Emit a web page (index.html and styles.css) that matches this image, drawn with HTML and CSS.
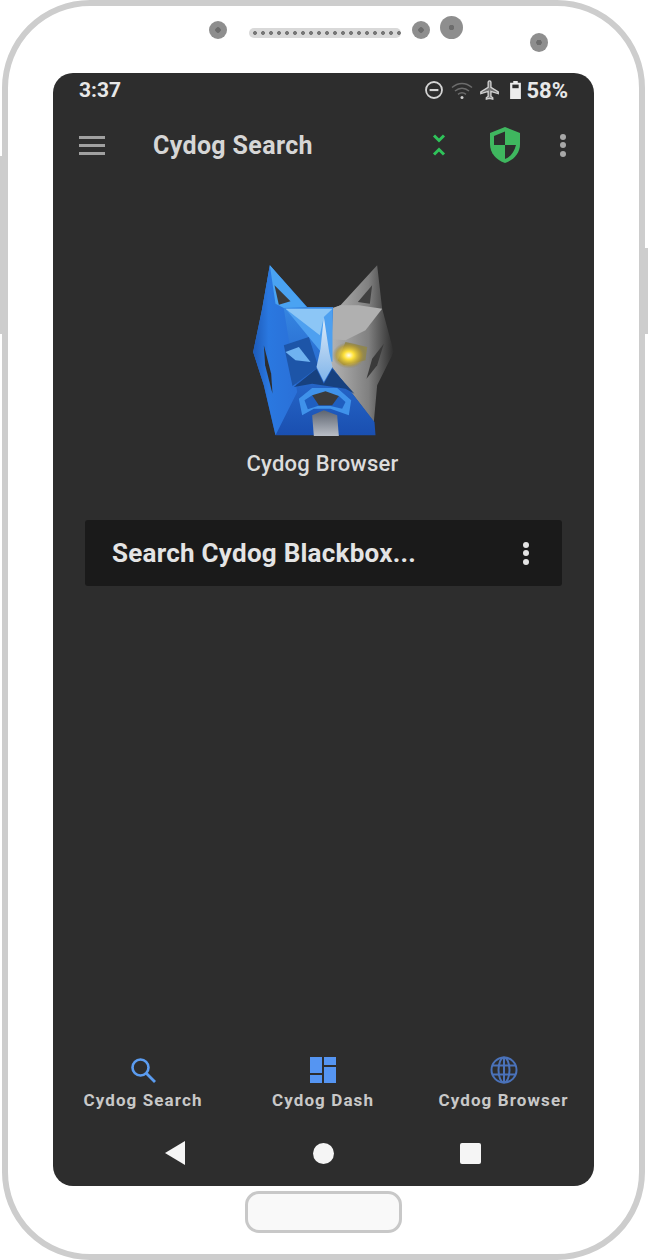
FILE: index.html
```html
<!DOCTYPE html>
<html lang="en">
<head>
    <meta charset="UTF-8">
    <meta name="viewport" content="width=device-width, initial-scale=1.0">
    <title>Cydog Search</title>
    <link rel="stylesheet" href="styles.css">
</head>
<body>
    <div class="side-key side-key-left"></div>
    <div class="side-key side-key-right"></div>
    <div class="phone">
        <div class="sensors">
            <span class="sensor sensor-a"></span>
            <span class="speaker"></span>
            <span class="sensor sensor-b"></span>
            <span class="sensor sensor-c"></span>
            <span class="sensor sensor-d"></span>
        </div>

        <div class="screen">
            <div class="status-bar">
                <span class="clock">3:37</span>
                <div class="status-icons">
                    <svg class="st-dnd" viewBox="0 0 20 20"><circle cx="10" cy="10" r="8" fill="none" stroke="#d4d4d4" stroke-width="1.8"/><rect x="5.600" y="9" width="8.800" height="2.100" fill="#d4d4d4"/></svg>
                    <svg class="st-wifi" viewBox="0 0 24 20"><path d="M2 7.500C8 2 16 2 22 7.500M5 11c4.200-3.600 9.800-3.600 14 0M8 14.300c2.500-2 5.500-2 8 0" fill="none" stroke="#6b6b6b" stroke-width="1.500"/><circle cx="12" cy="17.500" r="1.500" fill="#cfcfcf"/></svg>
                    <svg class="st-plane" viewBox="0 0 24 24"><path d="M21 16v-2l-8-5V3.500c0-.83-.67-1.500-1.500-1.500S10 2.670 10 3.500V9l-8 5v2l8-2.500V19l-2 1.500V22l3.500-1 3.500 1v-1.500L13 19v-5.500l8 2.500z" fill="#6f6f6f" stroke="#d0d0d0" stroke-width="1.500"/></svg>
                    <svg class="st-batt" viewBox="0 0 14 20"><path d="M4.500 0h5v2H13v18H1V2h3.500z" fill="#ececec"/><rect x="3.500" y="4" width="7" height="4" fill="#2d2d2d"/></svg>
                    <span class="batt-text">58%</span>
                </div>
            </div>

            <div class="app-bar">
                <div class="menu-icon"><span></span><span></span><span></span></div>
                <span class="app-title">Cydog Search</span>
                <svg class="ic-chevrons" viewBox="0 0 14 24"><path d="M2 2.500l5 5 5-5M2 21.500l5-5 5 5" fill="none" stroke="#2fc35a" stroke-width="3"/></svg>
                <svg class="ic-shield" viewBox="0 0 30 36"><path d="M15 0L30 6v11c0 9-6 16-15 19C6 33 0 26 0 17V6z" fill="#3fb75f"/><path d="M15 4.500L4 9v9h11zM15 18v14c5.500-2 9.500-7.500 11-14z" fill="#2d2d2d"/></svg>
                <div class="kebab kebab-bar"><span></span><span></span><span></span></div>
            </div>

            <div class="brand">
                <svg class="logo" viewBox="10.500 0 540 600">
                    <defs>
                        <linearGradient id="blueBody" x1="0" y1="0" x2="0" y2="1">
                            <stop offset="0" stop-color="#3f98ee"/>
                            <stop offset="0.55" stop-color="#2a6fd2"/>
                            <stop offset="1" stop-color="#1a4fb0"/>
                        </linearGradient>
                        <linearGradient id="greySide" x1="0" y1="0" x2="1" y2="0">
                            <stop offset="0" stop-color="#b4b4b4"/>
                            <stop offset="0.6" stop-color="#808080"/>
                            <stop offset="1" stop-color="#2d2d2d"/>
                        </linearGradient>
                        <linearGradient id="leftEdge" x1="0" y1="0" x2="1" y2="0">
                            <stop offset="0" stop-color="#1d5ab8"/>
                            <stop offset="0.35" stop-color="#2a78e0"/>
                            <stop offset="1" stop-color="#2a70d8"/>
                        </linearGradient>
                        <linearGradient id="neck" x1="0" y1="0" x2="0" y2="1">
                            <stop offset="0" stop-color="#5d6470"/>
                            <stop offset="1" stop-color="#b9bec6"/>
                        </linearGradient>
                        <linearGradient id="blade" x1="0" y1="0" x2="0" y2="1">
                            <stop offset="0" stop-color="#e0ecf8"/>
                            <stop offset="1" stop-color="#7fb4ea"/>
                        </linearGradient>
                        <radialGradient id="glow" cx="0.5" cy="0.5" r="0.5">
                            <stop offset="0" stop-color="#fffdf0"/>
                            <stop offset="0.3" stop-color="#ffe23a"/>
                            <stop offset="0.75" stop-color="#b59a34" stop-opacity="0.7"/>
                            <stop offset="1" stop-color="#8a8260" stop-opacity="0"/>
                        </radialGradient>
                    </defs>
                    <polygon points="440,40 330,160 306,168 300,340 430,510 440,400 490,300 455,170" fill="url(#greySide)"/>
                    <polygon points="330,160 385,160 455,170 405,235 345,265 306,262 306,170" fill="#b0b0b0"/>
                    <polygon points="118,40 230,165 308,165 300,340 432,510 435,550 135,550 100,400 68,300 95,170" fill="url(#blueBody)"/>
                    <polygon points="68,300 95,170 118,40 160,170 200,420 135,550 100,400" fill="url(#leftEdge)"/>
                    <polygon points="118,40 228,165 160,168 135,155" fill="#4aa3f2"/>
                    <polygon points="132,100 180,148 145,158" fill="#3b3b3b"/>
                    <polygon points="425,100 382,150 418,155" fill="#404040"/>
                    <polygon points="165,170 306,170 306,330 292,325" fill="#4ea0f0"/>
                    <polygon points="165,170 306,170 280,195 268,250" fill="#8cc6f6"/>
                    <polygon points="160,280 235,255 264,345 186,402" fill="#1d55a8"/>
                    <polygon points="165,300 205,285 240,330 195,325" fill="#6fb2f0"/>
                    <polygon points="100,280 122,365 126,425 104,340" fill="#2d2d2d"/>
                    <polygon points="460,275 440,340 408,380 425,320" fill="#3a3a3a"/>
                    <polygon points="322,325 345,270 410,285 405,325 340,340" fill="#8f8650"/>
                    <ellipse cx="355" cy="310" rx="50" ry="40" fill="url(#glow)"/>
                    <polygon points="280,195 296,300 306,345 280,390 258,345 270,290" fill="url(#blade)"/>
                    <polygon points="190,405 258,350 280,395 305,350 372,425 345,410 245,395" fill="#17417f"/>
                    <polygon points="205,440 245,408 320,408 362,445 355,490 300,470 250,470 215,490" fill="#3f92ea"/>
                    <polygon points="222,445 245,430 325,432 345,450 335,470 300,462 262,462 232,472" fill="#1f5fc0"/>
                    <polygon points="245,430 285,418 325,432 305,460 265,460" fill="#3b3b3b"/>
                    <polygon points="245,490 280,475 320,490 325,552 250,552" fill="url(#neck)"/>
                </svg>
                <span class="brand-name">Cydog Browser</span>
            </div>

            <div class="search-box">
                <span class="search-text">Search Cydog Blackbox...</span>
                <div class="kebab kebab-search"><span></span><span></span><span></span></div>
            </div>

            <div class="spacer"></div>

            <div class="tabs">
                <div class="tab">
                    <svg class="tab-icon" viewBox="0 0 28 28"><circle cx="11.500" cy="11.500" r="8" fill="none" stroke="#5b9cf0" stroke-width="2.600"/><path d="M17.500 17.500L26 26" stroke="#5b9cf0" stroke-width="2.800"/></svg>
                    <span class="tab-label">Cydog Search</span>
                </div>
                <div class="tab">
                    <svg class="tab-icon" viewBox="0 0 28 28"><path d="M1 1h12v16H1zM1 19h12v8H1zM15 1h12v8H15zM15 11h12v16H15z" fill="#5595f2"/></svg>
                    <span class="tab-label">Cydog Dash</span>
                </div>
                <div class="tab">
                    <svg class="tab-icon" viewBox="0 0 28 28"><g fill="none" stroke="#4a72ba" stroke-width="2"><circle cx="14" cy="14" r="12.500"/><ellipse cx="14" cy="14" rx="5.500" ry="12.500"/><path d="M2.500 9.500h23M2.500 18.500h23M14 1.500v25"/></g></svg>
                    <span class="tab-label">Cydog Browser</span>
                </div>
            </div>

            <div class="nav-bar">
                <svg class="nav-back" viewBox="0 0 20 24"><path d="M20 0v24L0 12z" fill="#f5f5f5"/></svg>
                <span class="nav-home"></span>
                <span class="nav-recent"></span>
            </div>
        </div>

        <div class="home-row">
            <div class="home-button"></div>
        </div>
    </div>
</body>
</html>
```

FILE: styles.css
```css
body {
    margin: 0;
    background-color: #ffffff;
    font-family: Roboto, "Liberation Sans", sans-serif;
    overflow: hidden;
}
.phone {
    box-sizing: border-box;
    width: 643px;
    height: 1260px;
    margin-left: 2px;
    padding: 0 45px;
    border: 6px solid #cdcdcd;
    border-radius: 88px;
    background-color: white;
}
.side-key {
    position: absolute;
    width: 3px;
    background-color: #cdcdcd;
}
.side-key-left {
    left: 0;
    top: 156px;
    height: 178px;
}
.side-key-right {
    left: 645px;
    top: 248px;
    height: 86px;
}

/* bezel hardware */
.sensors {
    display: flex;
    align-items: flex-start;
    height: 67px;
    padding-left: 156px;
}
.sensor {
    flex: none;
    box-sizing: border-box;
    background-color: #8e8e8e;
    background-image: radial-gradient(circle, #6c6c6c 0 2.5px, transparent 3px);
    border-radius: 50%;
}
.sensor-a {
    width: 18px;
    height: 18px;
    margin-top: 15px;
}
.speaker {
    width: 152px;
    height: 10px;
    margin: 22px 11px 0 22px;
    background-color: #d9d9d9;
    background-image: radial-gradient(circle, #777 0 1.8px, transparent 2.2px);
    background-size: 8px 10px;
    background-position: 2px 0;
    border-radius: 5px;
}
.sensor-b {
    width: 18px;
    height: 18px;
    margin-top: 15px;
}
.sensor-c {
    width: 23px;
    height: 23px;
    margin: 10px 0 0 10px;
}
.sensor-d {
    width: 18px;
    height: 19px;
    margin: 27px 0 0 67px;
}

.screen {
    display: flex;
    flex-direction: column;
    height: 1113px;
    background-color: #2d2d2d;
    border-radius: 20px;
    overflow: hidden;
}
.status-bar {
    display: flex;
    justify-content: space-between;
    align-items: center;
    height: 34px;
    padding: 0 26px;
    color: #e8e8e8;
}
.clock {
    font-size: 21px;
    font-weight: 700;
}
.status-icons {
    display: flex;
    align-items: center;
}
.st-dnd {
    width: 20px;
    height: 20px;
}
.st-wifi {
    width: 24px;
    height: 20px;
    margin-left: 6px;
}
.st-plane {
    width: 22px;
    height: 22px;
    margin-left: 5px;
}
.st-batt {
    width: 13px;
    height: 18px;
    margin-left: 8px;
}
.batt-text {
    margin-left: 4px;
    font-size: 22px;
    font-weight: 700;
}

.app-bar {
    display: flex;
    align-items: center;
    height: 76px;
    padding-left: 26px;
}
.menu-icon {
    display: flex;
    flex-direction: column;
    gap: 5px;
    width: 26px;
    margin-right: 48px;
}
.menu-icon span {
    height: 3px;
    background-color: #a0a0a0;
}
.app-title {
    width: 279px;
    font-size: 25px;
    font-weight: 700;
    letter-spacing: 0.35px;
    color: #d6d6d6;
    white-space: nowrap;
}
.ic-chevrons {
    width: 14px;
    height: 24px;
}
.ic-shield {
    width: 30px;
    height: 36px;
    margin-left: 44px;
}
.kebab {
    display: flex;
    flex-direction: column;
    gap: 2.5px;
    width: 6px;
}
.kebab span {
    height: 6px;
    border-radius: 50%;
}
.kebab-bar {
    margin-left: 40px;
}
.kebab-bar span {
    background-color: #a8a8a8;
}

.brand {
    display: flex;
    flex-direction: column;
    align-items: center;
    margin-top: 69px;
}
.logo {
    width: 180px;
    height: 200px;
    filter: blur(0.4px);
}
.brand-name {
    margin-top: -1px;
    margin-bottom: 2px;
    padding-right: 2px;
    font-size: 22px;
    font-weight: 500;
    letter-spacing: 0.25px;
    color: #dcdcdc;
}
.search-box {
    display: flex;
    justify-content: space-between;
    align-items: center;
    height: 66px;
    margin: 42px 32px 0;
    padding: 0 33px 0 27px;
    background-color: #1a1a1a;
    border-radius: 3px;
}
.search-text {
    font-size: 26px;
    font-weight: 700;
    letter-spacing: 0.25px;
    color: #e4e4e4;
}
.kebab-search span {
    background-color: #e4e4e4;
}

.spacer {
    flex: 1;
}
.tabs {
    display: grid;
    grid-template-columns: 180px 180px 181px;
}
.tab {
    display: flex;
    flex-direction: column;
    align-items: center;
}
.tab-icon {
    width: 28px;
    height: 28px;
}
.tab-label {
    margin-top: 6px;
    font-size: 17px;
    font-weight: 700;
    letter-spacing: 1.1px;
    color: #c8c8c8;
    white-space: nowrap;
}
.nav-bar {
    display: flex;
    align-items: center;
    gap: 127px;
    height: 66px;
    padding: 0 0 0 112px;
    margin-top: 10px;
}
.nav-back {
    width: 20px;
    height: 24px;
}
.nav-home {
    width: 21px;
    height: 21px;
    margin: 0 -1px 0 1px;
    background-color: #f5f5f5;
    border-radius: 50%;
}
.nav-recent {
    width: 21px;
    height: 21px;
    background-color: #f5f5f5;
    border-radius: 2px;
}

.home-row {
    display: flex;
    justify-content: center;
    margin-top: 5px;
}
.home-button {
    box-sizing: border-box;
    width: 157px;
    height: 42px;
    background-color: #f9f9f9;
    border: 3px solid #c8c8c8;
    border-radius: 14px;
}
```
